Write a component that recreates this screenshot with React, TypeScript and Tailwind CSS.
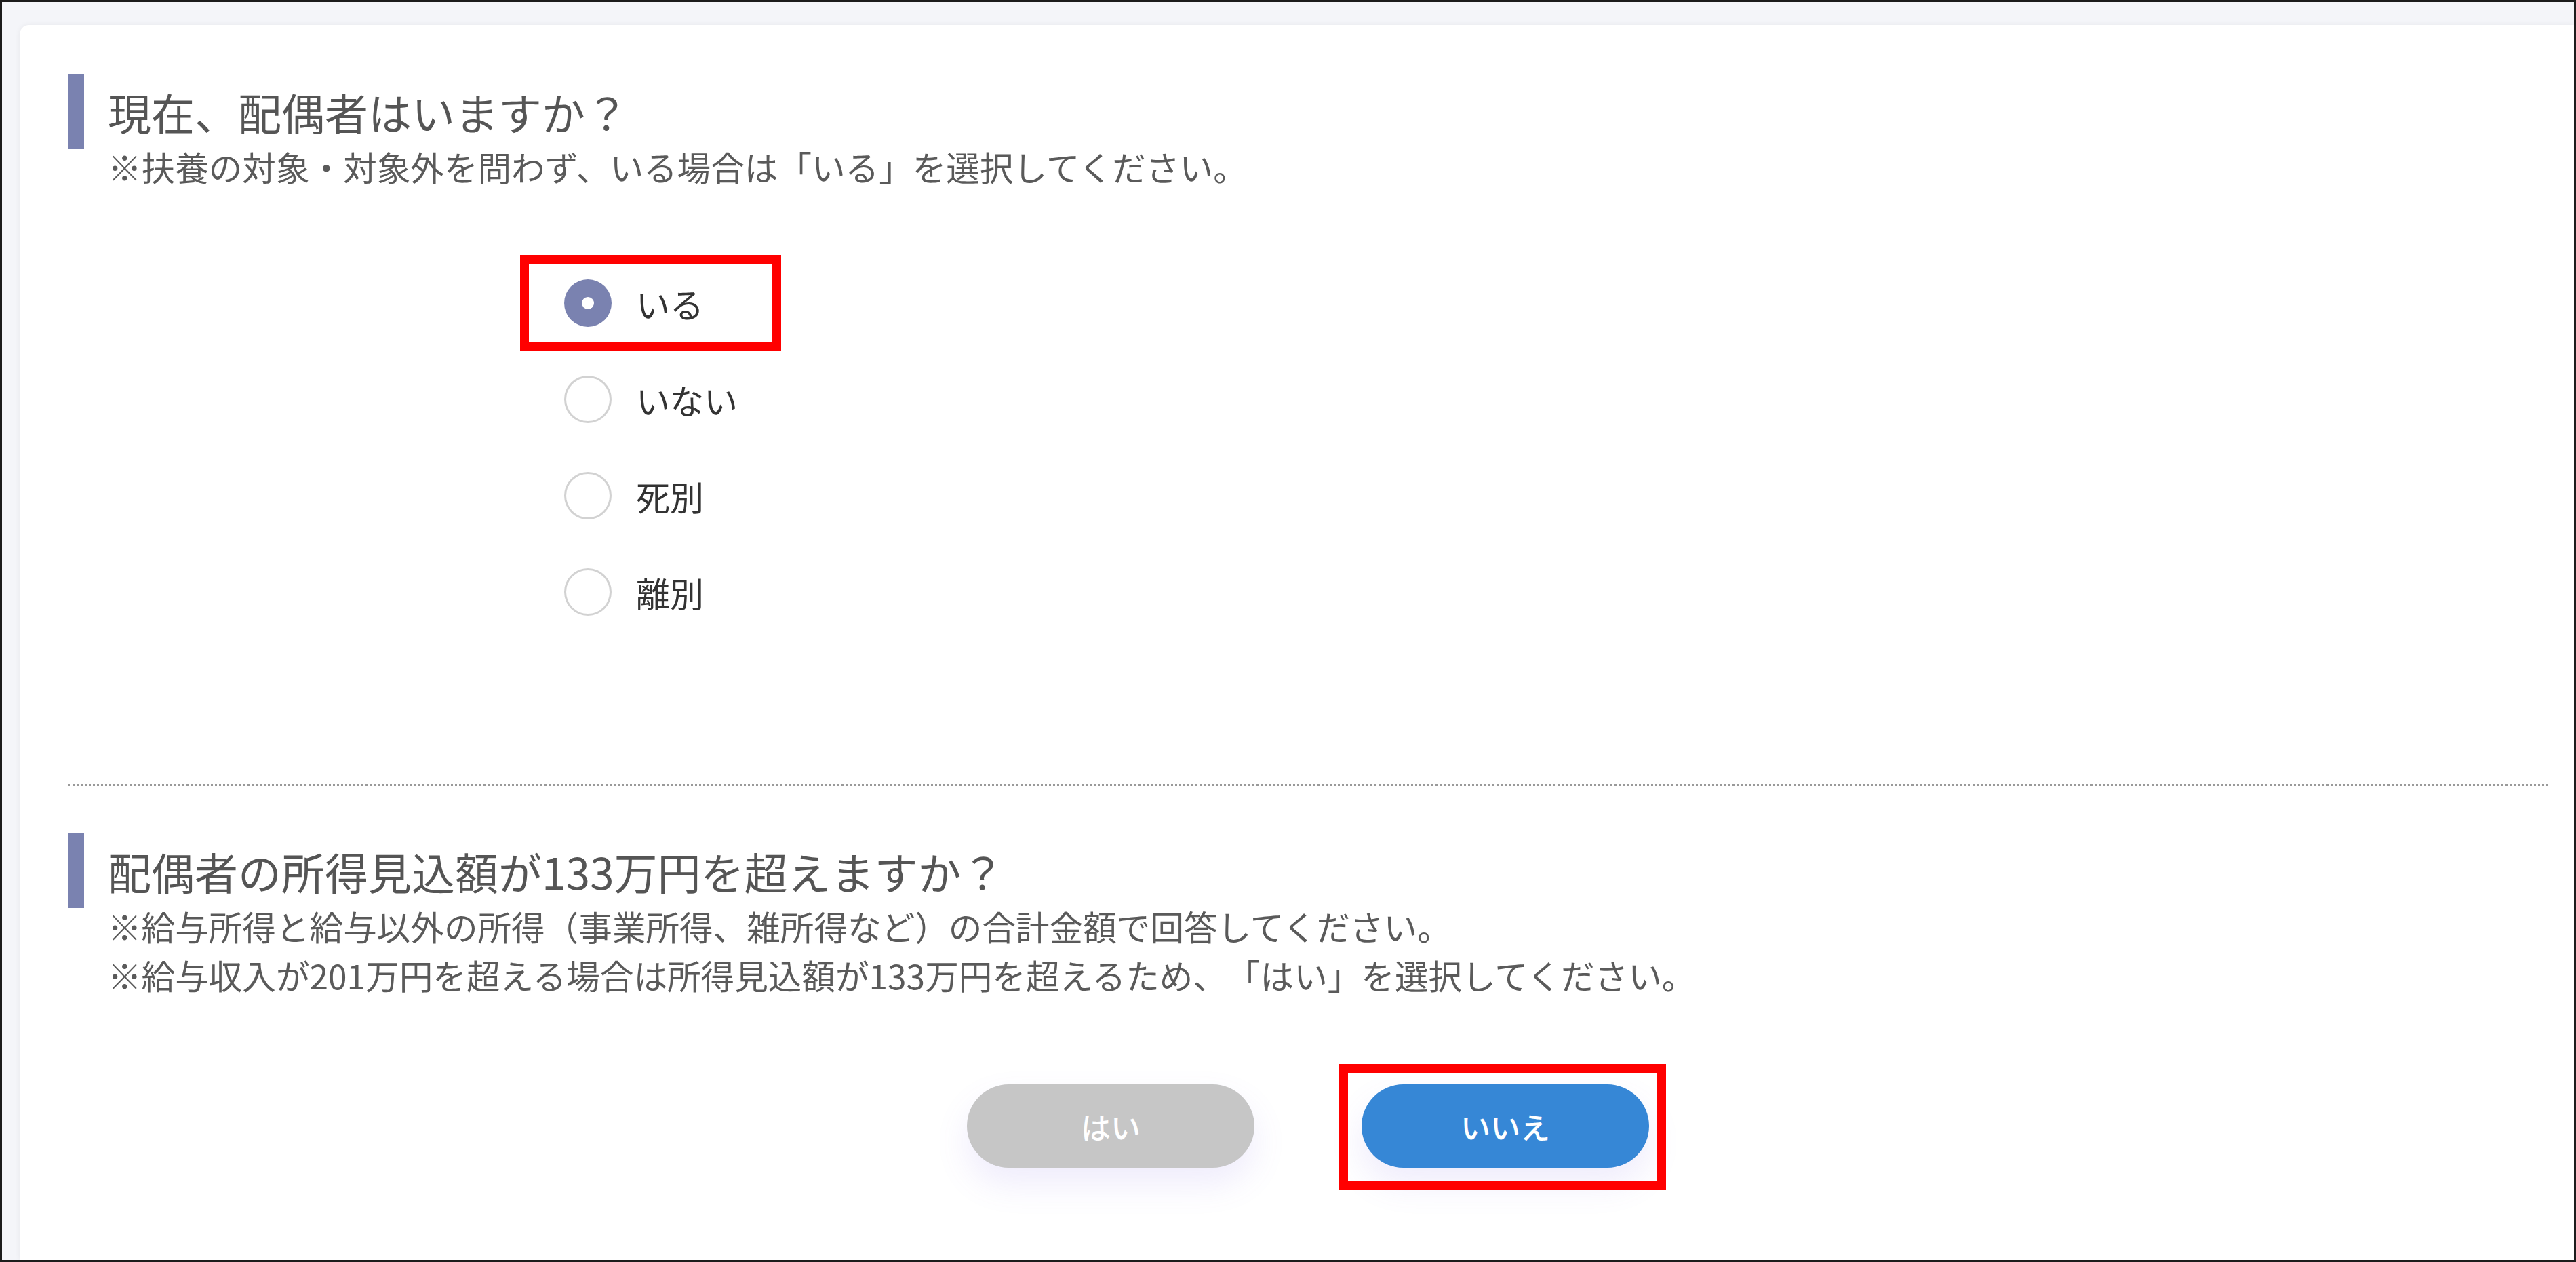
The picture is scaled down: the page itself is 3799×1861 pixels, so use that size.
import React from 'react';

const font = "font-['Noto_Sans_CJK_JP','Noto_Sans',sans-serif]";

const options = ['いる', 'いない', '死別', '離別'];

function SectionTitle({ title, notes }: { title: string; notes: string[] }) {
  return (
    <div>
      <div className="h-[110px] flex items-center border-l-[24px] border-[#7a82b0] pl-[35px]">
        <h2 className="text-[64px] leading-none text-[#555555] font-normal">{title}</h2>
      </div>
      <div className="-mt-[10px] pl-[59px] text-[49.6px] leading-[72px] text-[#5a5a5a] [text-spacing-trim:space-all]">
        {notes.map((n) => (
          <p key={n}>{n}</p>
        ))}
      </div>
    </div>
  );
}

function Radio({ label, checked, marked }: { label: string; checked?: boolean; marked?: boolean }) {
  return (
    <div className="relative h-[142px] flex items-center gap-[36px]">
      {checked ? (
        <span className="w-[70px] h-[70px] rounded-full bg-[#7a82b0] flex items-center justify-center">
          <span className="w-[18px] h-[18px] rounded-full bg-white" />
        </span>
      ) : (
        <span className="w-[70px] h-[70px] rounded-full border-[3px] border-[#d2d2d2] bg-white" />
      )}
      <span className="text-[50px] leading-none text-[#333333]">{label}</span>
      {marked && (
        <div className="absolute left-[-65px] top-0 w-[385px] h-[142px] border-[13px] border-[#ff0000]" />
      )}
    </div>
  );
}

export default function App() {
  return (
    <div className={`${font} w-[3799px] h-[1861px] border-[3px] border-[#1c1c1c] bg-[#f4f5f9] flex flex-col pt-[34px] pl-[26px] overflow-hidden`}>
      <div className="flex-1 bg-white rounded-tl-[14px] shadow-[0_0_8px_rgba(0,0,0,0.06)] pt-[72px] pl-[71px] pr-[38px]">
        <SectionTitle
          title="現在、配偶者はいますか？"
          notes={['※扶養の対象・対象外を問わず、いる場合は「いる」を選択してください。']}
        />

        <div className="mt-[95px] pl-[732px]">
          {options.map((o, i) => (
            <Radio key={o} label={o} checked={i === 0} marked={i === 0} />
          ))}
        </div>

        <div className="mt-[212px] border-t-[3px] border-dotted border-[#9a9a9a]" />

        <div className="mt-[70px]">
          <SectionTitle
            title="配偶者の所得見込額が133万円を超えますか？"
            notes={[
              '※給与所得と給与以外の所得（事業所得、雑所得など）の合計金額で回答してください。',
              '※給与収入が201万円を超える場合は所得見込額が133万円を超えるため、「はい」を選択してください。',
            ]}
          />
        </div>

        <div className="mt-[126px] flex justify-center gap-[158px]">
          <button className="w-[424px] h-[123px] rounded-full bg-[#c6c6c6] text-white text-[44px] font-medium shadow-[0_24px_50px_rgba(120,100,230,0.12)]">
            はい
          </button>
          <div className="relative">
            <button className="w-[424px] h-[123px] rounded-full bg-[#3687d6] text-white text-[44px] font-medium shadow-[0_24px_50px_rgba(120,100,230,0.12)]">
              いいえ
            </button>
            <div className="absolute left-[-33px] top-[-30px] w-[482px] h-[186px] border-[13px] border-[#ff0000]" />
          </div>
        </div>
      </div>
    </div>
  );
}
